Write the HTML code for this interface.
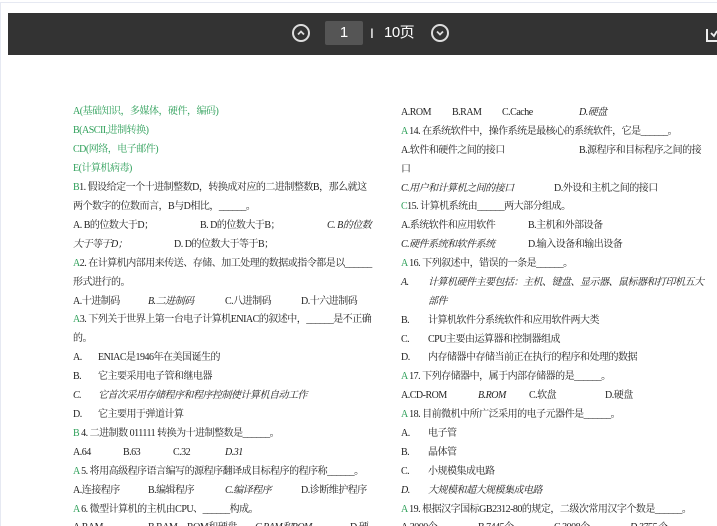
<!DOCTYPE html>
<html><head><meta charset="utf-8">
<style>
html,body{margin:0;padding:0;width:717px;height:526px;overflow:hidden;background:#fff;}
body{position:relative;font-family:"Liberation Serif","Noto Serif CJK SC","Noto Sans CJK SC",serif;font-size:10px;letter-spacing:-0.5px;color:#222;}
.frame{position:absolute;left:0;top:2px;width:717px;height:524px;border-top:1px solid #e6e9f2;border-left:1px solid #e6e9f2;box-sizing:border-box;}
.bar{position:absolute;left:8px;top:13px;width:720px;height:42px;background:#333;}
.l{position:absolute;white-space:nowrap;line-height:12px;margin-top:2px;}
.g{color:#2fa05a;}
i,.i{font-style:italic;}
.c{position:absolute;width:18px;height:18px;border:2px solid #ddd;border-radius:50%;box-sizing:border-box;}
</style></head><body>
<div class="frame"></div>
<div class="bar"></div>
<div class="c" style="left:292px;top:24px;"><svg width="14" height="14" viewBox="0 0 14 14" style="position:absolute;left:0;top:0"><path d="M4 8.5 L7 5.5 L10 8.5" stroke="#ddd" stroke-width="1.8" fill="none"/></svg></div>
<div style="position:absolute;left:325px;top:21px;width:38px;height:24px;background:#555;border-radius:2px;color:#fff;font-family:'Liberation Sans',sans-serif;font-size:15px;letter-spacing:0;text-align:center;line-height:24px;">1</div>
<div style="position:absolute;left:370px;top:24px;color:#fff;font-family:'Liberation Sans','Noto Sans CJK SC',sans-serif;font-size:14px;letter-spacing:0;line-height:18px;">I</div>
<div style="position:absolute;left:384px;top:23px;color:#fff;font-family:'Liberation Sans','Noto Sans CJK SC',sans-serif;font-size:15px;line-height:20px;letter-spacing:-0.5px;">10页</div>
<div class="c" style="left:431px;top:24px;"><svg width="14" height="14" viewBox="0 0 14 14" style="position:absolute;left:0;top:0"><path d="M4 5.5 L7 8.5 L10 5.5" stroke="#ddd" stroke-width="1.8" fill="none"/></svg></div>
<svg style="position:absolute;left:706px;top:25px" width="11" height="20"><path d="M1 4 V16 H11" stroke="#eee" stroke-width="2" fill="none"/><path d="M5 8 L8 11 L11 6" stroke="#eee" stroke-width="1.8" fill="none"/></svg>

<div class="l g" style="left:73px;top:104px">A(基础知识，多媒体，硬件，编码)</div>
<div class="l g" style="left:73px;top:123px">B(ASCII,进制转换)</div>
<div class="l g" style="left:73px;top:142px">CD(网络，电子邮件)</div>
<div class="l g" style="left:73px;top:161px">E(计算机病毒)</div>
<div class="l" style="left:73px;top:180px"><span class="g">B</span>1. 假设给定一个十进制整数D，转换成对应的二进制整数B，那么就这</div>
<div class="l" style="left:73px;top:199px">两个数字的位数而言，B与D相比，______。</div>
<div class="l" style="left:73px;top:218px">A. B的位数大于D；</div>
<div class="l" style="left:200px;top:218px">B. D的位数大于B；</div>
<div class="l i" style="left:327px;top:218px">C. B的位数</div>
<div class="l i" style="left:73px;top:237px">大于等于D；</div>
<div class="l" style="left:174px;top:237px">D. D的位数大于等于B；</div>
<div class="l" style="left:73px;top:256px"><span class="g">A</span>2. 在计算机内部用来传送、存储、加工处理的数据或指令都是以______</div>
<div class="l" style="left:73px;top:275px">形式进行的。</div>
<div class="l" style="left:73px;top:294px">A.十进制码</div>
<div class="l i" style="left:148px;top:294px">B.二进制码</div>
<div class="l" style="left:225px;top:294px">C.八进制码</div>
<div class="l" style="left:301px;top:294px">D.十六进制码</div>
<div class="l" style="left:73px;top:312px"><span class="g">A</span>3. 下列关于世界上第一台电子计算机ENIAC的叙述中，______是不正确</div>
<div class="l" style="left:73px;top:331px">的。</div>
<div class="l" style="left:73px;top:350px">A.</div><div class="l" style="left:98px;top:350px">ENIAC是1946年在美国诞生的</div>
<div class="l" style="left:73px;top:369px">B.</div><div class="l" style="left:98px;top:369px">它主要采用电子管和继电器</div>
<div class="l i" style="left:73px;top:388px">C.</div><div class="l i" style="left:98px;top:388px">它首次采用存储程序和程序控制使计算机自动工作</div>
<div class="l" style="left:73px;top:407px">D.</div><div class="l" style="left:98px;top:407px">它主要用于弹道计算</div>
<div class="l" style="left:73px;top:426px"><span class="g">B</span> 4. 二进制数 011111 转换为十进制整数是______。</div>
<div class="l" style="left:73px;top:445px">A.64</div><div class="l" style="left:123px;top:445px">B.63</div><div class="l" style="left:173px;top:445px">C.32</div><div class="l i" style="left:225px;top:445px">D.31</div>
<div class="l" style="left:73px;top:464px"><span class="g">A</span> 5. 将用高级程序语言编写的源程序翻译成目标程序的程序称______。</div>
<div class="l" style="left:73px;top:483px">A.连接程序</div><div class="l" style="left:148px;top:483px">B.编辑程序</div><div class="l i" style="left:225px;top:483px">C.编译程序</div><div class="l" style="left:301px;top:483px">D.诊断维护程序</div>
<div class="l" style="left:73px;top:502px"><span class="g">A</span> 6. 微型计算机的主机由CPU、______构成。</div>
<div class="l" style="left:73px;top:520px">A.RAM</div><div class="l" style="left:148px;top:520px">B.RAM、ROM和硬盘</div><div class="l i" style="left:255px;top:520px">C.RAM和ROM</div><div class="l" style="left:350px;top:520px">D.硬</div>

<div class="l" style="left:401px;top:105px">A.ROM</div><div class="l" style="left:452px;top:105px">B.RAM</div><div class="l" style="left:502px;top:105px">C.Cache</div><div class="l i" style="left:579px;top:105px">D.硬盘</div>
<div class="l" style="left:401px;top:124px"><span class="g">A</span> 14. 在系统软件中，操作系统是最核心的系统软件，它是______。</div>
<div class="l" style="left:401px;top:143px">A.软件和硬件之间的接口</div><div class="l" style="left:579px;top:143px">B.源程序和目标程序之间的接</div>
<div class="l" style="left:401px;top:162px">口</div>
<div class="l i" style="left:401px;top:181px">C.用户和计算机之间的接口</div><div class="l" style="left:554px;top:181px">D.外设和主机之间的接口</div>
<div class="l" style="left:401px;top:199px"><span class="g">C</span>15. 计算机系统由______两大部分组成。</div>
<div class="l" style="left:401px;top:218px">A.系统软件和应用软件</div><div class="l" style="left:528px;top:218px">B.主机和外部设备</div>
<div class="l i" style="left:401px;top:237px">C.硬件系统和软件系统</div><div class="l" style="left:528px;top:237px">D.输入设备和输出设备</div>
<div class="l" style="left:401px;top:256px"><span class="g">A</span> 16. 下列叙述中，错误的一条是______。</div>
<div class="l i" style="left:401px;top:275px">A.</div><div class="l i" style="left:428px;top:275px">计算机硬件主要包括：主机、键盘、显示器、鼠标器和打印机五大</div>
<div class="l i" style="left:428px;top:294px">部件</div>
<div class="l" style="left:401px;top:313px">B.</div><div class="l" style="left:428px;top:313px">计算机软件分系统软件和应用软件两大类</div>
<div class="l" style="left:401px;top:332px">C.</div><div class="l" style="left:428px;top:332px">CPU主要由运算器和控制器组成</div>
<div class="l" style="left:401px;top:350px">D.</div><div class="l" style="left:428px;top:350px">内存储器中存储当前正在执行的程序和处理的数据</div>
<div class="l" style="left:401px;top:369px"><span class="g">A</span> 17. 下列存储器中，属于内部存储器的是______。</div>
<div class="l" style="left:401px;top:388px">A.CD-ROM</div><div class="l i" style="left:478px;top:388px">B.ROM</div><div class="l" style="left:529px;top:388px">C.软盘</div><div class="l" style="left:605px;top:388px">D.硬盘</div>
<div class="l" style="left:401px;top:407px"><span class="g">A</span> 18. 目前微机中所广泛采用的电子元器件是______。</div>
<div class="l" style="left:401px;top:426px">A.</div><div class="l" style="left:428px;top:426px">电子管</div>
<div class="l" style="left:401px;top:445px">B.</div><div class="l" style="left:428px;top:445px">晶体管</div>
<div class="l" style="left:401px;top:464px">C.</div><div class="l" style="left:428px;top:464px">小规模集成电路</div>
<div class="l i" style="left:401px;top:483px">D.</div><div class="l i" style="left:428px;top:483px">大规模和超大规模集成电路</div>
<div class="l" style="left:401px;top:502px"><span class="g">A</span> 19. 根据汉字国标GB2312-80的规定，二级次常用汉字个数是______。</div>
<div class="l" style="left:401px;top:520px">A.3000个</div><div class="l" style="left:478px;top:520px">B.7445个</div><div class="l" style="left:554px;top:520px">C.3008个</div><div class="l i" style="left:630px;top:520px">D.3755个</div>
</body></html>
